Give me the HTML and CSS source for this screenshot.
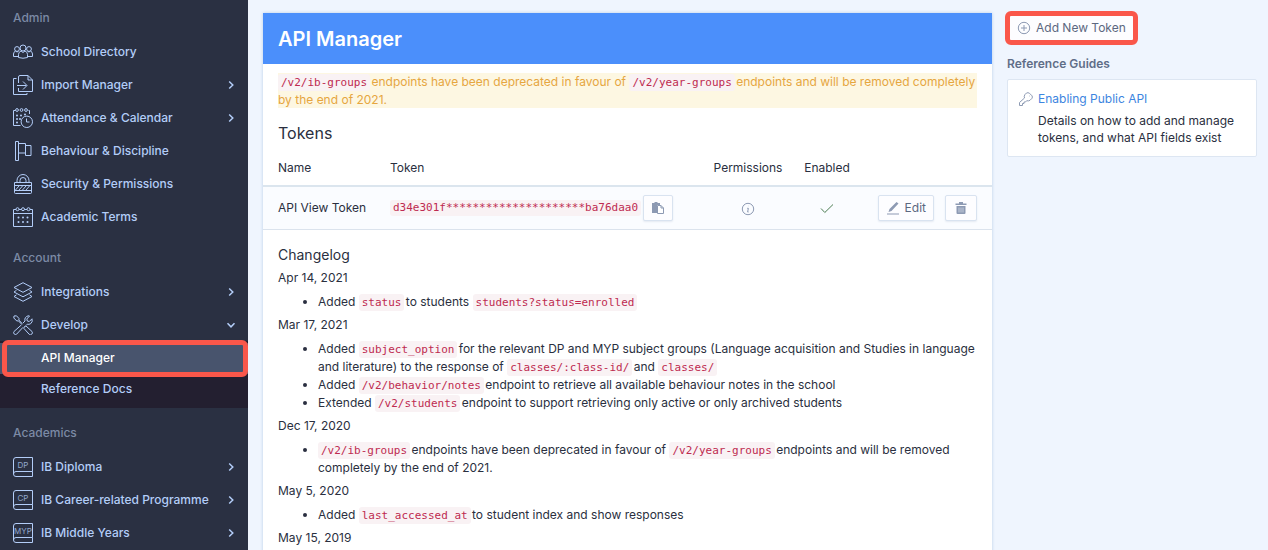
FILE: index.html
```html
<!DOCTYPE html>
<html lang="en">
<head>
<meta charset="utf-8">
<meta name="viewport" content="width=device-width, initial-scale=1">
<title>API Manager</title>
<link rel="stylesheet" href="styles.css">
</head>
<body>
<svg class="defs" width="0" height="0" aria-hidden="true">
  <symbol id="chevron" viewBox="0 0 10 10"><path d="M3.2 1.5 6.8 5 3.2 8.5"/></symbol>
  <symbol id="book" viewBox="0 0 20 20"><path d="M19.5 14.5v5H3a2.5 2.5 0 0 1 0-5h16.500V.5H3A2.500 2.500 0 0 0 .5 3v14"/></symbol>
</svg>
<div class="app">
  <nav class="sidebar" aria-label="Main">
    <h2 class="nav-title">Admin</h2>
    <ul class="nav-list">
      <li><a class="nav-item" href="#">
        <svg class="icon" viewBox="0 0 20 20"><circle cx="10" cy="6" r="3"/><circle cx="4" cy="7" r="2.400"/><circle cx="16" cy="7" r="2.400"/><path d="M5.500 15.500v-3q0-2.500 2.500-3.500l2 1.500 2-1.500q2.500 1 2.500 3.500v3q-4.500 1.500-9 0zM5.500 14.500h-5v-2.500q0-2 2-3l1.500 1 1.500-.8M14.500 14.500h5v-2.500q0-2-2-3l-1.500 1-1.500-.8"/></svg>
        <span class="nav-label">School Directory</span></a></li>
      <li><a class="nav-item" href="#">
        <svg class="icon" viewBox="0 0 20 20"><path d="M5.500 13v3.500h14V5L15 .5H7A1.500 1.500 0 0 0 5.500 2v6M15 .5V5h4.500M3.500 3.500H.5v16h13.500v-1.500M4 10.500h9.500M10 6.500l4 4-4 4"/></svg>
        <span class="nav-label">Import Manager</span><svg class="chevron"><use href="#chevron"/></svg></a></li>
      <li><a class="nav-item" href="#">
        <svg class="icon" viewBox="0 0 20 20"><path d="M7.500 17.500h-7v-15h2M16.500 6V2.500h-1"/><circle cx="4" cy="2" r="1.400"/><circle cx="8.500" cy="2" r="1.400"/><circle cx="13" cy="2" r="1.400"/><circle cx="13.800" cy="13.800" r="5.700"/><path d="M13.500 10.500v3.500h3"/><path class="dots" d="M4 7.500h0M8 7.500h0M12 6.500h0M4 11h0M7 11h0M4 14.500h0"/></svg>
        <span class="nav-label">Attendance &amp; Calendar</span><svg class="chevron"><use href="#chevron"/></svg></a></li>
      <li><a class="nav-item" href="#">
        <svg class="icon" viewBox="0 0 20 20"><path d="M2.500.5h3v19h-3zM5.500 2.500h7v9.500h-7M12.500 4.500h5.500v10h-5.500V12"/></svg>
        <span class="nav-label">Behaviour &amp; Discipline</span></a></li>
      <li><a class="nav-item" href="#">
        <svg class="icon" viewBox="0 0 20 20"><path d="M1.500 8.500h17v10q0 1-1 1h-15q-1 0-1-1zM1.500 11.500h17M1.500 16.500h17M4 8.500V6.500a6 6 0 0 1 12 0v2M7 8.500v-2a3 3 0 0 1 6 0v2M2.500 16l3.500-4M6 16l3.500-4M9.500 16l3.500-4M13 16l3.500-4"/></svg>
        <span class="nav-label">Security &amp; Permissions</span></a></li>
      <li><a class="nav-item" href="#">
        <svg class="icon" viewBox="0 0 20 20"><path d="M3 2.500H.5v17h19v-17H17M.5 6.500h19M6 2.500h2.500M11.500 2.500H14"/><circle cx="4.500" cy="2.200" r="1.500"/><circle cx="10" cy="2.200" r="1.500"/><circle cx="15.500" cy="2.200" r="1.500"/><path class="dots" d="M5.500 10.500h0M10 10.500h0M14.500 10.500h0M5.500 15h0M10 15h0M14.500 15h0"/></svg>
        <span class="nav-label">Academic Terms</span></a></li>
    </ul>
    <h2 class="nav-title">Account</h2>
    <ul class="nav-list">
      <li><a class="nav-item" href="#">
        <svg class="icon" viewBox="0 0 20 20"><path d="M10 .7 19 5.500 10 10.300 1 5.500zM3.500 8.300 1 10l9 4.800 9-4.800-2.500-1.700M3.500 12.800 1 14.500l9 4.800 9-4.800-2.500-1.700"/></svg>
        <span class="nav-label">Integrations</span><svg class="chevron"><use href="#chevron"/></svg></a></li>
      <li><a class="nav-item" href="#" aria-expanded="true">
        <svg class="icon" viewBox="0 0 20 20"><path d="M1 1 3.500.8 6 3.500 5.800 5l3.500 3.700M1 1 .8 3l3 3 1.500-.2 3.500 3.500M11.500 11.500l1.500-.5 6 5.500a2 2 0 0 1-2.800 2.800l-5.400-6 .7-1.800M10 8l2-2q-1-4 3.500-5.300l1 .3-2.700 3 .5 2 2 .5 2.700-2.700q1 3.200-1.500 5-1.500.9-3.200.4l-1.300 1.300M8.500 9.800l-7.500 6.700a1.900 1.900 0 0 0 2.600 2.700L10 12.300"/></svg>
        <span class="nav-label">Develop</span><svg class="chevron chevron-open"><use href="#chevron"/></svg></a>
        <ul class="subnav">
          <li><a class="subnav-item subnav-current marked" href="#" aria-current="page">API Manager</a></li>
          <li><a class="subnav-item" href="#">Reference Docs</a></li>
        </ul></li>
    </ul>
    <h2 class="nav-title">Academics</h2>
    <ul class="nav-list">
      <li><a class="nav-item" href="#">
        <svg class="icon" viewBox="0 0 20 20"><use href="#book"/><text class="book-text" x="10" y="11">DP</text></svg>
        <span class="nav-label">IB Diploma</span><svg class="chevron"><use href="#chevron"/></svg></a></li>
      <li><a class="nav-item" href="#">
        <svg class="icon" viewBox="0 0 20 20"><use href="#book"/><text class="book-text" x="10" y="11">CP</text></svg>
        <span class="nav-label">IB Career-related Programme</span><svg class="chevron"><use href="#chevron"/></svg></a></li>
      <li><a class="nav-item" href="#">
        <svg class="icon" viewBox="0 0 20 20"><use href="#book"/><text class="book-text" x="10" y="11">MYP</text></svg>
        <span class="nav-label">IB Middle Years</span><svg class="chevron"><use href="#chevron"/></svg></a></li>
    </ul>
  </nav>

  <main class="content">
    <section class="card">
      <h1 class="card-title">API Manager</h1>
      <p class="notice"><code>/v2/ib-groups</code> endpoints have been deprecated in favour of <code>/v2/year-groups</code> endpoints and will be removed completely by the end of 2021.</p>
      <h2 class="section-title">Tokens</h2>
      <table class="tokens">
        <thead>
          <tr><th class="col-name">Name</th><th>Token</th><th class="col-permissions">Permissions</th><th class="col-enabled">Enabled</th><th class="col-actions"></th></tr>
        </thead>
        <tbody>
          <tr>
            <td class="col-name">API View Token</td>
            <td><div class="token"><code>d34e301f*********************ba76daa0</code><button class="button" type="button" aria-label="Copy token"><svg class="small-icon solid" viewBox="0 0 14 14"><path d="M1 2h2.500V1h3v1H9v2H6v8H1z"/><path class="sheet" d="M6.500 4.500h3.500l2.500 2.500v5.500h-6zM10 4.500V7h2.500"/></svg></button></div></td>
            <td class="col-permissions"><svg class="small-icon" viewBox="0 0 14 14" role="img" aria-label="Permission details"><circle cx="7" cy="7" r="5.700"/><path d="M7.600 4h.2M6.200 6.300h1.200L6.600 10h1"/></svg></td>
            <td class="col-enabled"><svg class="small-icon check" viewBox="0 0 14 14" role="img" aria-label="Enabled"><path d="M1 6.500 4.800 10.500 13 2.500"/></svg></td>
            <td class="col-actions"><div class="actions">
              <button class="button" type="button"><svg class="small-icon solid" viewBox="0 0 14 14"><path d="M2.500 11 3.500 8 10.500 1l2 1.500-7 7.500zM1 12.500h12v1H1z"/></svg>Edit</button>
              <button class="button button-delete" type="button" aria-label="Delete token"><svg class="small-icon solid" viewBox="0 0 14 14"><path d="M5 1h4v1.500h3.500V4h-11V2.500H5zM2.500 5h9v7q0 1-1 1h-7q-1 0-1-1z"/><path class="ribs" d="M5 6.500v5M7 6.500v5M9 6.500v5"/></svg></button>
            </div></td>
          </tr>
        </tbody>
      </table>
      <div class="changelog">
        <h3 class="changelog-title">Changelog</h3>
        <p>Apr 14, 2021</p>
        <ul><li>Added <code>status</code> to students <code>students?status=enrolled</code></li></ul>
        <p>Mar 17, 2021</p>
        <ul>
          <li>Added <code>subject_option</code> for the relevant DP and MYP subject groups (Language acquisition and Studies in language and literature) to the response of <code>classes/:class-id/</code> and <code>classes/</code></li>
          <li>Added <code>/v2/behavior/notes</code> endpoint to retrieve all available behaviour notes in the school</li>
          <li>Extended <code>/v2/students</code> endpoint to support retrieving only active or only archived students</li>
        </ul>
        <p>Dec 17, 2020</p>
        <ul><li><code>/v2/ib-groups</code> endpoints have been deprecated in favour of <code>/v2/year-groups</code> endpoints and will be removed completely by the end of 2021.</li></ul>
        <p>May 5, 2020</p>
        <ul><li>Added <code>last_accessed_at</code> to student index and show responses</li></ul>
        <p>May 15, 2019</p>
      </div>
    </section>
    <aside class="aside">
      <button class="button add-button marked" type="button"><svg class="small-icon" viewBox="0 0 14 14"><circle cx="7" cy="7" r="5.700"/><path d="M7 4v6M4 7h6"/></svg>Add New Token</button>
      <h2 class="aside-title">Reference Guides</h2>
      <div class="guide">
        <svg class="key-icon" viewBox="0 0 14 14"><path d="M.5 13.500v-3l5-4.500q-.8-1.800.5-3.500l1.500-1.500q1.500-.8 3 .3l2.500 2.500q.8 1.200 0 2.500l-2 2q-1.500 1-3.300.4l-1.200 1.300H5v1.500H3.500v2zM10 4h.5"/></svg>
        <div class="guide-body">
          <a class="guide-link" href="#">Enabling Public API</a>
          <p class="guide-text">Details on how to add and manage tokens, and what API fields exist</p>
        </div>
      </div>
    </aside>
  </main>
</div>
</body>
</html>
```
FILE: styles.css
```css
* {
  box-sizing: border-box;
}

body,
h1,
h2,
h3,
p,
ul {
  margin: 0;
}

body {
  color: #2a2f40;
  background: #eff5fe;
  font: 12px/18px Inter, "Liberation Sans", sans-serif;
}

svg {
  flex: none;
  fill: none;
  stroke: currentColor;
}

a {
  text-decoration: none;
}

.defs {
  position: absolute;
}

.app {
  display: flex;
  height: 100vh;
  overflow: hidden;
}

/* Sidebar */
.sidebar {
  flex: none;
  width: 248px;
  color: #b3cdf8;
  background: #2a3042;
  font-weight: 500;
}

.nav-title {
  padding: 16px 13px 8px;
  color: #7c8aa5;
  font-size: 12px;
  font-weight: 500;
  line-height: 18px;
}

.nav-title:first-child {
  padding-top: 9px;
}

.nav-list,
.subnav {
  padding: 0;
  list-style: none;
}

.nav-item {
  display: flex;
  align-items: center;
  gap: 8px;
  height: 33px;
  padding: 0 12px 0 13px;
  color: inherit;
}

.nav-label {
  flex: 1;
}

.icon {
  width: 20px;
  height: 20px;
}

.dots {
  stroke-width: 2;
  stroke-linecap: round;
}

.book-text {
  fill: #93a8ce;
  stroke: none;
  font-size: 8px;
  font-weight: 400;
  text-anchor: middle;
}

.chevron {
  width: 10px;
  height: 10px;
  stroke-width: 1.5;
}

.chevron-open {
  transform: rotate(90deg);
}

.subnav {
  padding: 2px 0 3px;
  background: #231f30;
}

.subnav-item {
  display: block;
  padding: 6px 41px 7px;
  color: inherit;
}

.subnav-current {
  color: #fff;
  background: #48546d;
}

/* Red outline drawing attention to a control */
.marked {
  position: relative;
}

.marked::after {
  position: absolute;
  inset: -3px 0 -3px 2px;
  border: 5px solid #fa574a;
  border-radius: 6px;
  content: "";
}

/* Main area */
.content {
  display: flex;
  flex: 1;
  align-items: flex-start;
  gap: 15px;
  min-width: 0;
  padding: 13px 11px 13px 15px;
}

.card {
  flex: 1;
  min-width: 0;
  background: #fff;
  box-shadow: 0 0 3px #b9cce6;
}

.card-title {
  padding: 12px 15px 11px;
  color: #fff;
  background: #4b8ffb;
  font-size: 20px;
  font-weight: 600;
  line-height: 28px;
}

code {
  margin-right: -2px;
  padding: 2px 3px;
  border-radius: 3px;
  color: #be2a50;
  background: #f9f2f4;
  font: 11px/16px "DejaVu Sans Mono", monospace;
}

.notice {
  margin: 9px 15px 0;
  color: #e6a63f;
  background: #fdf7e2;
  line-height: 17px;
}

.section-title {
  padding: 14px 15px 15px;
  font-size: 16px;
  font-weight: 400;
  line-height: 22px;
}

.tokens {
  width: 100%;
  border-spacing: 0;
}

.tokens th {
  padding: 0 0 8px;
  border-bottom: 2px solid #dbe5ee;
  font-weight: 400;
  text-align: left;
}

.tokens td {
  height: 43px;
  padding: 0;
  border-bottom: 1px solid #dbe3ed;
  background: #fafcff;
}

.tokens .col-name {
  width: 127px;
  padding-left: 15px;
}

.tokens .col-permissions {
  width: 88px;
  text-align: center;
}

.tokens .col-enabled {
  width: 70px;
  text-align: center;
}

.tokens .col-actions {
  width: 130px;
  padding-right: 15px;
}

.col-permissions svg,
.col-enabled svg {
  vertical-align: middle;
}

.token,
.actions {
  display: flex;
  align-items: center;
}

.token {
  gap: 4px;
}

.token code {
  padding: 0 3px;
}

.actions {
  justify-content: flex-end;
  gap: 11px;
}

.button {
  display: flex;
  align-items: center;
  gap: 5px;
  height: 26px;
  padding: 0 7px;
  border: 1px solid #d9e3f0;
  border-radius: 2px;
  color: #5c6880;
  background: #fdfdff;
  box-shadow: 0 1px 2px #e4eaf2;
  font: 12px/18px Inter, "Liberation Sans", sans-serif;
}

.button-delete {
  padding: 0 8px;
}

.small-icon {
  width: 14px;
  height: 14px;
  color: #8d9ab3;
}

.solid {
  fill: currentColor;
  stroke: none;
}

.sheet {
  fill: #fff;
  stroke: currentColor;
}

.ribs {
  stroke: #c5cddc;
}

.check {
  color: #4c7d52;
}

.changelog {
  padding: 15px 15px 30px;
}

.changelog-title {
  padding-bottom: 4px;
  font-size: 14px;
  font-weight: 400;
  line-height: 20px;
}

.changelog ul {
  margin: 6px 0 5px;
  padding-left: 40px;
}

/* Right column */
.aside {
  flex: none;
  width: 250px;
}

.add-button {
  height: 30px;
  padding: 0 9px;
}

.add-button::after {
  inset: -3px;
}

.aside-title {
  padding: 12px 0 6px;
  color: #5f6e88;
  font-size: 12px;
  font-weight: 600;
  line-height: 18px;
}

.guide {
  display: flex;
  gap: 5px;
  padding: 10px 15px 10px 11px;
  border: 1px solid #dde6f2;
  border-radius: 2px;
  background: #fff;
}

.key-icon {
  width: 14px;
  height: 14px;
  margin-top: 2px;
  color: #8d9ab3;
}

.guide-link {
  color: #3d85e0;
}

.guide-text {
  padding-top: 4px;
  line-height: 17px;
}
```
